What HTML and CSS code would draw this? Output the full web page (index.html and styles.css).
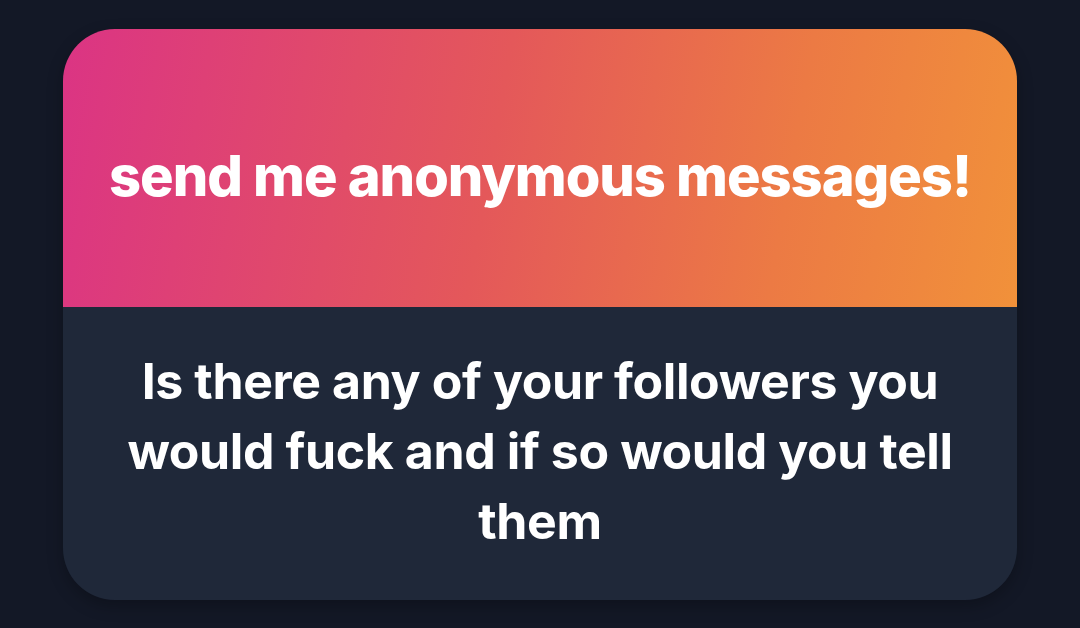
FILE: index.html
```html
<!DOCTYPE html>
<html>
<head>
<meta charset="utf-8">
<link rel="stylesheet" href="styles.css">
</head>
<body>
<div class="card">
  <div class="header">
    <h1 class="title">send me anonymous messages!</h1>
  </div>
  <div class="body">
    <p class="question">Is there any of your followers you would fuck and if so would you tell them</p>
  </div>
</div>
</body>
</html>
```
FILE: styles.css
```css
html, body {
  margin: 0;
  padding: 0;
}
body {
  width: 1080px;
  height: 628px;
  background: #131826;
  font-family: Inter, "Noto Sans", sans-serif;
  display: flex;
  justify-content: center;
  padding-top: 29px;
  box-sizing: border-box;
  overflow: hidden;
}
.card {
  width: 954px;
  height: 571px;
  border-radius: 52px;
  overflow: hidden;
  display: flex;
  flex-direction: column;
  box-shadow: 0 6px 16px rgba(0,0,0,0.25);
}
.header {
  height: 278px;
  box-sizing: border-box;
  padding-top: 16px;
  background: linear-gradient(100deg, #db3484 0%, #e4585a 45%, #ec7a44 75%, #f1913a 100%);
  display: flex;
  align-items: center;
  justify-content: center;
}
.title {
  margin: 0;
  color: #ffffff;
  font-weight: 800;
  font-size: 56px;
  letter-spacing: -1.05px;
  line-height: 1;
}
.body {
  flex: 1;
  box-sizing: border-box;
  background: #1f2839;
  display: flex;
  align-items: center;
  justify-content: center;
  padding: 0 50px 6px;
}
.question {
  margin: 0;
  color: #ffffff;
  font-weight: 700;
  font-size: 50px;
  line-height: 70px;
  text-align: center;
  letter-spacing: -0.4px;
  max-width: 850px;
}
```
